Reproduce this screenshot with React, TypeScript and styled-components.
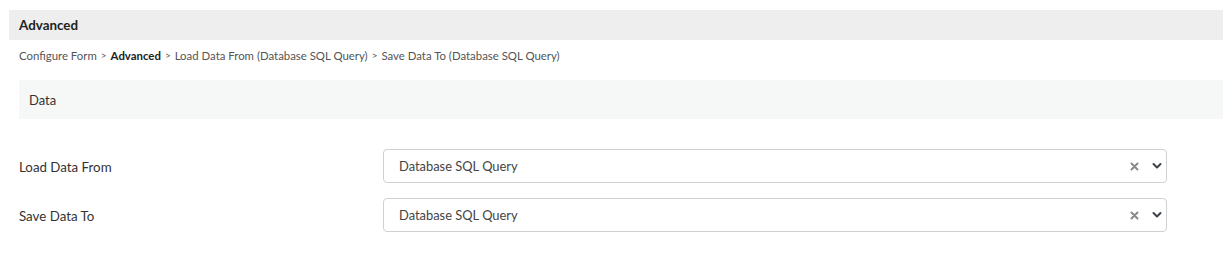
import React from "react";
import styled, { createGlobalStyle } from "styled-components";

const Global = createGlobalStyle`
  html, body { margin: 0; padding: 0; background: #fff; }
  body { font-family: "Segoe UI", Lato, "Noto Sans", sans-serif; color: #333; }
`;

const Page = styled.div`
  padding: 10px 0 0 9px;
`;

const HeaderBar = styled.div`
  height: 30px;
  background: #eeeeee;
  display: flex;
  align-items: center;
  padding-left: 10px;
  font-size: 13.4px;
  font-weight: 700;
  color: #222;
`;

const Body = styled.div`
  padding-left: 10px;
`;

const Crumbs = styled.div`
  height: 30px;
  display: flex;
  align-items: center;
  font-size: 11.4px;
  color: #555;
  white-space: pre;
`;

const CrumbSep = styled.span`
  margin: 0 4px;
  font-size: 10px;
`;

const Strong = styled.b`
  color: #222;
  font-weight: 700;
`;

const SectionPanel = styled.div`
  margin-top: 10px;
  height: 39px;
  background: #f6f7f7;
  display: flex;
  align-items: center;
  padding-left: 10px;
  font-size: 13px;
  color: #333;
`;

const Form = styled.div`
  margin-top: 30px;
  display: flex;
  flex-direction: column;
  gap: 15px;
`;

const Row = styled.div`
  display: flex;
  align-items: center;
  height: 34px;
`;

const Label = styled.div`
  width: 364px;
  font-size: 13.3px;
  color: #333;
  padding-top: 2px;
`;

const Select = styled.div`
  width: 784px;
  height: 34px;
  box-sizing: border-box;
  border: 1px solid #cfd1d4;
  border-radius: 4px;
  display: flex;
  align-items: center;
  padding: 0 4px 0 15px;
  font-size: 12.9px;
  color: #444;
`;

const Value = styled.span`
  flex: 1;
`;

const Icons = styled.span`
  display: flex;
  align-items: center;
  gap: 13px;
`;

const Caret = () => (
  <svg width="10" height="8" viewBox="0 0 10 8">
    <path d="M1.5 2 L5 5.5 L8.5 2" stroke="#3d4148" strokeWidth="2" fill="none" strokeLinecap="round" strokeLinejoin="round" />
  </svg>
);

const Clear = () => (
  <svg width="9" height="9" viewBox="0 0 9 9">
    <path d="M1.5 1.5 L7.5 7.5 M7.5 1.5 L1.5 7.5" stroke="#8a8a8a" strokeWidth="2" strokeLinecap="round" />
  </svg>
);

const Field = ({ label, value }: { label: string; value: string }) => (
  <Row>
    <Label>{label}</Label>
    <Select>
      <Value>{value}</Value>
      <Icons>
        <Clear />
        <Caret />
      </Icons>
    </Select>
  </Row>
);

export default function App() {
  return (
    <>
      <Global />
      <Page>
        <HeaderBar>Advanced</HeaderBar>
        <Body>
          <Crumbs>
            Configure Form<CrumbSep>&gt;</CrumbSep>
            <Strong>Advanced</Strong>
            <CrumbSep>&gt;</CrumbSep>Load Data From (Database SQL Query)
            <CrumbSep>&gt;</CrumbSep>Save Data To (Database SQL Query)
          </Crumbs>
          <SectionPanel>Data</SectionPanel>
          <Form>
            <Field label="Load Data From" value="Database SQL Query" />
            <Field label="Save Data To" value="Database SQL Query" />
          </Form>
        </Body>
      </Page>
    </>
  );
}
